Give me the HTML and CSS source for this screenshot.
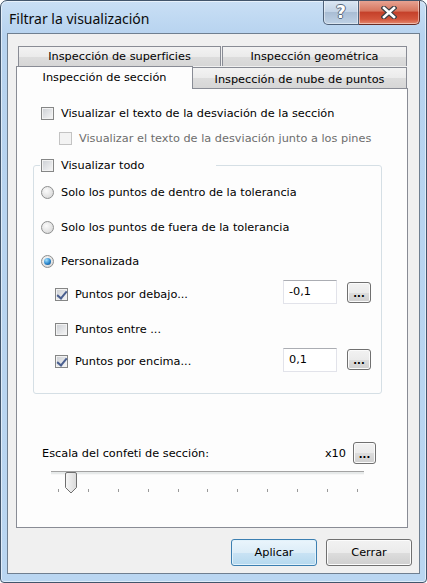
FILE: index.html
```html
<!DOCTYPE html>
<html lang="es">
<head>
    <meta charset="UTF-8">
    <title>Filtrar la visualización</title>
    <link rel="stylesheet" href="styles.css">
</head>
<body>
    <div class="window">
        <div class="titlebar">
            <span class="title">Filtrar la visualización</span>
            <div class="caption">
                <span class="cap-btn help">?</span>
                <span class="cap-btn close">
                    <svg width="16" height="13" viewBox="0 0 16 13">
                        <path d="M3 2 L13 11 M13 2 L3 11" stroke="#3d3f45" stroke-width="5" stroke-linecap="square"/>
                        <path d="M3 2 L13 11 M13 2 L3 11" stroke="#fff" stroke-width="2.6" stroke-linecap="square"/>
                    </svg>
                </span>
            </div>
        </div>
        <div class="client">
            <div class="tabs">
                <div class="tab-row back">
                    <div class="tab t-sup">Inspección de superficies</div>
                    <div class="tab t-geo">Inspección geométrica</div>
                </div>
                <div class="tab-row front">
                    <div class="tab active">Inspección de sección</div>
                    <div class="tab t-nube">Inspección de nube de puntos</div>
                </div>
            </div>
            <div class="page">
                <label class="row first"><span class="cb"></span>Visualizar el texto de la desviación de la sección</label>
                <label class="row sub disabled"><span class="cb"></span>Visualizar el texto de la desviación junto a los pines</label>
                <div class="group">
                    <label class="row legend"><span class="cb"></span>Visualizar todo</label>
                    <label class="row opt r1"><span class="radio"></span>Solo los puntos de dentro de la tolerancia</label>
                    <label class="row opt r2"><span class="radio"></span>Solo los puntos de fuera de la tolerancia</label>
                    <label class="row opt r3"><span class="radio on"></span>Personalizada</label>
                    <div class="val-row v1">
                        <label class="row"><span class="cb checked"></span>Puntos por debajo...</label>
                        <span class="field">-0,1</span>
                        <button class="dots">...</button>
                    </div>
                    <label class="row inner v2"><span class="cb"></span>Puntos entre ...</label>
                    <div class="val-row v3">
                        <label class="row"><span class="cb checked"></span>Puntos por encima...</label>
                        <span class="field">0,1</span>
                        <button class="dots">...</button>
                    </div>
                </div>
                <div class="scale-row">
                    <span class="scale-label">Escala del confeti de sección:</span>
                    <span class="scale-val">x10</span>
                    <button class="dots big">...</button>
                </div>
                <div class="slider">
                    <div class="track"></div>
                    <svg class="thumb" width="12" height="22" viewBox="0 0 12 22">
                        <defs>
                            <linearGradient id="tg" x1="0" y1="0" x2="1" y2="0">
                                <stop offset="0" stop-color="#f7f7f7"/>
                                <stop offset="1" stop-color="#d9d9d9"/>
                            </linearGradient>
                        </defs>
                        <path d="M2 0.5 H10 Q11.5 0.5 11.5 2 V15.5 L6 21 L0.5 15.5 V2 Q0.5 0.5 2 0.5 Z" fill="url(#tg)" stroke="#6f6f6f"/>
                    </svg>
                    <div class="ticks">
                        <i></i><i></i><i></i><i></i><i></i><i></i><i></i><i></i><i></i><i></i><i></i>
                    </div>
                </div>
            </div>
            <div class="actions">
                <button class="btn default">Aplicar</button>
                <button class="btn">Cerrar</button>
            </div>
        </div>
    </div>
</body>
</html>
```

FILE: styles.css
```css
* {
    box-sizing: border-box;
}
body {
    margin: 0;
    background: #fff;
    font-family: "DejaVu Sans", "Liberation Sans", sans-serif;
    font-size: 11.3px;
    color: #000;
}
.window {
    width: 427px;
    height: 583px;
    border: 1px solid #42556b;
    border-radius: 7px 7px 4px 4px;
    background: linear-gradient(#c9dff5, #b7d3ef 34px, #bad6f1);
    box-shadow: inset 0 0 0 1px rgba(255, 255, 255, 0.55);
    overflow: hidden;
}
.titlebar {
    height: 32px;
    display: flex;
    justify-content: space-between;
    align-items: flex-start;
}
.title {
    font-family: "Noto Sans", sans-serif;
    font-size: 14px;
    line-height: 20px;
    margin: 8px 0 0 8px;
    color: #0b0b0b;
}
.caption {
    display: flex;
    margin: -1px 6px 0 0;
}
.cap-btn {
    height: 25px;
    display: flex;
    align-items: center;
    justify-content: center;
    border: 1px solid #4f6178;
    border-top: none;
    box-shadow: inset 0 0 0 1px rgba(255, 255, 255, 0.45);
}
.help {
    width: 36px;
    border-radius: 0 0 0 5px;
    background: linear-gradient(#dde8f4, #c2d3e6 48%, #a9bdd4 52%, #bfd2e6);
    font-family: "DejaVu Sans", sans-serif;
    font-weight: bold;
    font-size: 17px;
    color: #fff;
    text-shadow: -1px 0 #5a6a7e, 1px 0 #5a6a7e, 0 -1px #5a6a7e, 0 1px #5a6a7e;
}
.close {
    width: 61px;
    border-left: none;
    border-color: #6a2b22;
    border-radius: 0 0 5px 0;
    background: linear-gradient(#e8a797, #d7765f 45%, #c5412a 52%, #d3553b 80%, #e48a70);
}
.client {
    margin: 0 6px 8px;
    height: 541px;
    border: 1px solid #6f7f90;
    background: #f0f0f0;
    padding: 12px 0 0 8px;
}
.tabs {
    width: 392px;
}
.tab-row {
    display: flex;
}
.tab-row.back {
    height: 20px;
    padding-left: 2px;
    gap: 1px;
}
.tab-row.front {
    height: 22px;
    align-items: flex-end;
}
.tab {
    border: 1px solid #898c95;
    border-bottom: none;
    background: linear-gradient(#f3f3f3, #ebebeb 50%, #dddddd 51%, #d6d6d6);
    display: flex;
    justify-content: center;
    align-items: center;
    white-space: nowrap;
}
.t-sup {
    width: 203px;
    height: 20px;
}
.t-geo {
    width: 185px;
    height: 20px;
}
.tab.active {
    width: 177px;
    height: 23px;
    margin-bottom: -1px;
    position: relative;
    z-index: 1;
    background: #fdfdfd;
    padding-bottom: 2px;
}
.t-nube {
    width: 215px;
    height: 21px;
    margin-left: -1px;
    padding-top: 3px;
}
.page {
    width: 392px;
    height: 440px;
    border: 1px solid #898c95;
    background: #fdfdfd;
}
.row {
    display: flex;
    align-items: center;
    height: 16px;
    white-space: nowrap;
}
.first {
    margin-top: 16px;
    padding-left: 24px;
}
.sub {
    margin-top: 9px;
    padding-left: 42px;
}
.disabled {
    color: #6d6d6d;
}
.cb, .radio {
    width: 13px;
    height: 13px;
    margin-right: 7px;
    flex-shrink: 0;
    position: relative;
}
.cb {
    border: 1px solid #858686;
    background: linear-gradient(135deg, #cbced3, #f7f7f7);
    box-shadow: inset 0 0 0 1px #f2f2f2;
}
.disabled .cb {
    border-color: #c3c3c3;
    background: #f3f3f3;
    box-shadow: none;
}
.cb.checked::after {
    content: "";
    position: absolute;
    left: 3px;
    top: 0;
    width: 4px;
    height: 8px;
    border: solid #4a5f8f;
    border-width: 0 2px 2px 0;
    transform: rotate(40deg);
}
.radio {
    border-radius: 50%;
    border: 1px solid #8e8f8f;
    background: radial-gradient(circle at 40% 35%, #fbfbfb, #e2e2e2 60%, #cfcfcf);
}
.radio.on::after {
    content: "";
    position: absolute;
    left: 2px;
    top: 2px;
    width: 7px;
    height: 7px;
    border-radius: 50%;
    background: radial-gradient(circle at 35% 30%, #a5e2ff, #2a86cc 55%, #0d3f72);
}
.group {
    margin: 19px 0 0 16px;
    width: 349px;
    border: 1px solid #d5dfe5;
    border-radius: 3px;
    padding-bottom: 20px;
}
.legend {
    margin: -9px 0 0 6px;
    width: 176px;
    padding-left: 1px;
    background: #fdfdfd;
}
.opt {
    padding-left: 7px;
}
.r1 {
    margin-top: 11px;
}
.r2 {
    margin-top: 19px;
}
.r3 {
    margin-top: 18px;
}
.val-row {
    display: flex;
    align-items: center;
    height: 24px;
    padding: 0 10px 0 21px;
}
.val-row .row {
    flex: 1;
}
.v1 {
    margin-top: 13px;
}
.v3 {
    margin-top: 12px;
}
.inner {
    padding-left: 21px;
    margin-top: 15px;
}
.field {
    align-self: flex-start;
    margin: -2px 10px 0 0;
    width: 54px;
    height: 24px;
    border: 1px solid #e2e3ea;
    border-top-color: #abadb3;
    background: #fff;
    padding: 4px 0 0 5px;
}
.v3 .field {
    margin-top: -1px;
}
.dots {
    align-self: flex-start;
    width: 24px;
    height: 21px;
    padding: 0 0 3px;
    border: 1px solid #707070;
    border-radius: 3px;
    background: linear-gradient(#f2f2f2, #ebebeb 50%, #dddddd 51%, #cfcfcf);
    box-shadow: inset 0 0 0 1px #fbfbfb;
    font-family: "DejaVu Sans", sans-serif;
    font-size: 10px;
    font-weight: bold;
    line-height: 10px;
    display: flex;
    align-items: flex-end;
    justify-content: center;
}
.scale-row {
    display: flex;
    align-items: center;
    height: 22px;
    margin-top: 48px;
    padding: 0 31px 0 25px;
}
.scale-label {
    flex: 1;
}
.scale-val {
    margin-right: 7px;
}
.dots.big {
    align-self: center;
    width: 23px;
    height: 22px;
}
.slider {
    position: relative;
    margin: 7px 0 0 34px;
    width: 313px;
    height: 30px;
}
.track {
    margin-top: 7px;
    height: 4px;
    border-top: 1px solid #a3a3a3;
    background: #e7eaea;
    border-bottom: 1px solid #f7f7f7;
}
.thumb {
    position: absolute;
    left: 14px;
    top: 1px;
}
.ticks {
    display: flex;
    justify-content: space-between;
    margin-top: 14px;
    padding: 0 6px 0 7px;
}
.ticks i {
    width: 1px;
    height: 3px;
    background: #999;
}
.actions {
    display: flex;
    justify-content: flex-end;
    gap: 9px;
    margin-top: 11px;
    padding-right: 7px;
}
.btn {
    width: 86px;
    height: 27px;
    border: 1px solid #707070;
    border-radius: 3px;
    background: linear-gradient(#f2f2f2, #ebebeb 50%, #dddddd 51%, #cfcfcf);
    box-shadow: inset 0 0 0 1px #fcfcfc;
    font-family: "DejaVu Sans", "Liberation Sans", sans-serif;
    font-size: 11.3px;
    color: #000;
    padding: 0;
}
.btn.default {
    border-color: #3c7fb1;
    background: linear-gradient(#eaf5fc, #dcedf8 50%, #c9e3f4 51%, #b6d9ef);
    box-shadow: inset 0 0 0 1px #e2f2fb;
}
```
